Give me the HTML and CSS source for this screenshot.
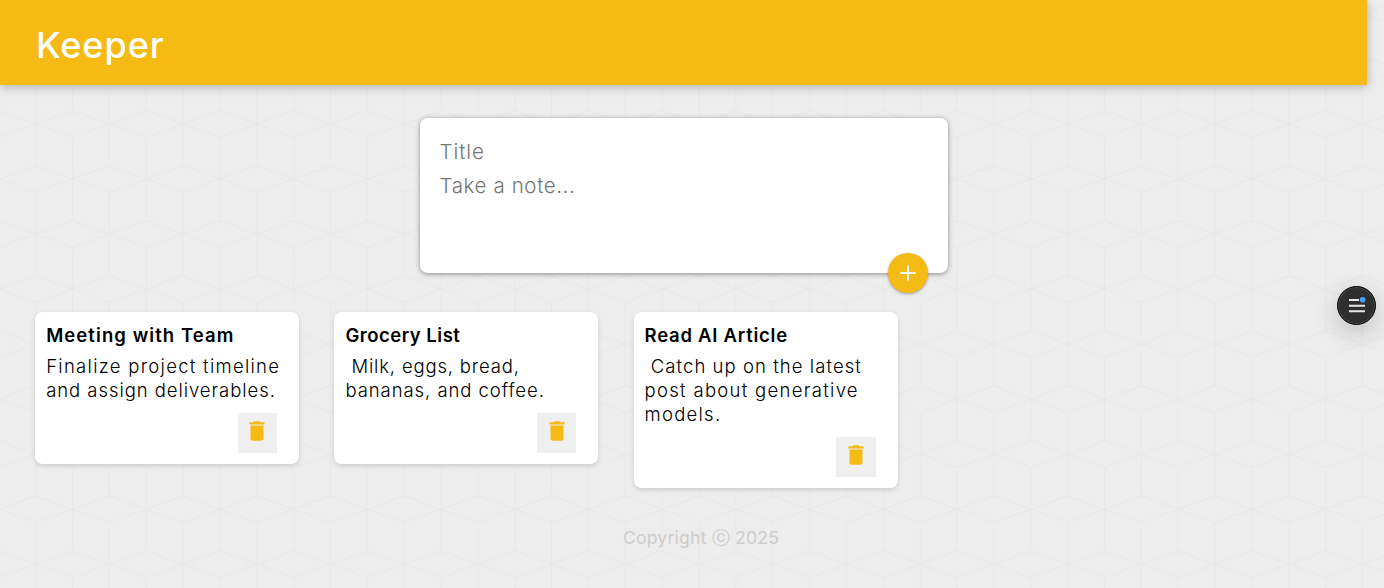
FILE: index.html
```html
<!DOCTYPE html>
<html lang="en">
<head>
<meta charset="utf-8">
<title>Keeper</title>
<link rel="stylesheet" href="styles.css">
</head>
<body>
<svg class="backdrop" aria-hidden="true">
  <defs>
    <pattern id="cubes" x="17.2" y="-13.6" width="73.71" height="110.07" patternUnits="userSpaceOnUse">
      <path class="cube-lines" d="M-18.43 14.2L18.43 27.5L-18.43 40.8M18.43 27.5L55.28 14.2L92.14 27.5M18.43 27.5L55.28 40.8L92.14 27.5M-18.43 82.5L18.43 69.2L55.28 82.5L18.43 95.8L-18.43 82.5M92.14 69.2L55.28 82.5L92.14 95.8M18.43 95.8V110.07M18.43 0V69.2M55.28 40.8V110.07M55.28 0V14.2"/>
    </pattern>
  </defs>
  <rect width="100%" height="100%" fill="url(#cubes)"/>
</svg>
<div class="page">
  <header class="header"><h1 class="logo">Keeper</h1></header>
  <form class="create-note">
    <input class="field field-title" placeholder="Title">
    <textarea class="field field-body" placeholder="Take a note..." rows="3"></textarea>
    <button class="add" type="button" aria-label="Add"><svg viewBox="0 0 24 24"><path d="M19 12.9h-6.1V19h-1.8v-6.1H5v-1.8h6.1V5h1.8v6.1H19z"/></svg></button>
  </form>
  <main class="notes">
    <article class="note">
      <h2 class="note-title t1">Meeting with Team</h2>
      <p class="note-text"><span class="a1">Finalize project timeline</span><br><span class="a2">and assign deliverables.</span></p>
      <button class="delete" type="button" aria-label="Delete"><svg viewBox="0 0 24 24"><path d="M6 19c0 1.1.9 2 2 2h8c1.1 0 2-.9 2-2V7H6v12zM19 4h-3.500l-1-1h-5l-1 1H5v2h14V4z"/></svg></button>
    </article>
    <article class="note">
      <h2 class="note-title t2">Grocery List</h2>
      <p class="note-text"><span class="b1">&nbsp;Milk, eggs, bread,</span><br><span class="b2">bananas, and coffee.</span></p>
      <button class="delete" type="button" aria-label="Delete"><svg viewBox="0 0 24 24"><path d="M6 19c0 1.1.9 2 2 2h8c1.1 0 2-.9 2-2V7H6v12zM19 4h-3.500l-1-1h-5l-1 1H5v2h14V4z"/></svg></button>
    </article>
    <article class="note">
      <h2 class="note-title t3">Read AI Article</h2>
      <p class="note-text"><span class="c1">&nbsp;Catch up on the latest</span><br><span class="c2">post about generative</span><br><span class="c3">models.</span></p>
      <button class="delete" type="button" aria-label="Delete"><svg viewBox="0 0 24 24"><path d="M6 19c0 1.1.9 2 2 2h8c1.1 0 2-.9 2-2V7H6v12zM19 4h-3.500l-1-1h-5l-1 1H5v2h14V4z"/></svg></button>
    </article>
  </main>
  <footer class="footer">Copyright ⓒ 2025</footer>
</div>
<button class="assistant" type="button" aria-label="Menu">
  <svg viewBox="0 0 39 39"><path d="M12 14h10M12 19.700h16M12 25.300h16" stroke="#e6e6e6" stroke-width="1.900"/><circle cx="25.600" cy="13.800" r="2.800" fill="#4a9ffb"/></svg>
</button>
</body>
</html>
```

FILE: styles.css
```css
* { box-sizing: border-box; }
html { height: 100%; }
body {
  margin: 0;
  height: 588px;
  overflow: hidden;
  background: #ededed;
  font-family: Inter, "Noto Sans", sans-serif;
}
button { border: 0; padding: 0; cursor: pointer; }
.backdrop { position: absolute; inset: 0; width: 100%; height: 100%; z-index: -1; }
.cube-lines { fill: none; stroke: #e8e8e8; stroke-width: 1.3; }
.page { width: 1367px; }
.header {
  height: 85px;
  padding: 0 36px;
  display: flex;
  align-items: center;
  background: #f5ba13;
  box-shadow: 0 2px 10px rgba(0, 0, 0, .26);
}
.logo { margin: 4px 0 0; color: #fff; font-size: 36px; font-weight: 500; line-height: 44px; letter-spacing: .95px; }
.create-note {
  position: relative;
  width: 528px;
  height: 155px;
  margin: 33px auto 0;
  padding: 17px 20px;
  display: flex;
  flex-direction: column;
  background: #fff;
  border-radius: 7.7px;
  box-shadow: 0 1px 5.5px rgb(138, 137, 137);
}
.field {
  display: block;
  width: 100%;
  border: 0;
  padding: 0;
  outline: 0;
  resize: none;
  background: none;
  font: 300 20.500px/34px Inter, sans-serif;
}
.field::placeholder { color: #757575; opacity: 1; }
.field-title { height: 34px; letter-spacing: .95px; }
.field-body { letter-spacing: .62px; }
.add {
  position: absolute;
  right: 20px;
  bottom: -20px;
  width: 40px;
  height: 40px;
  border-radius: 50%;
  background: #f5ba13;
  box-shadow: 0 1px 3px rgba(0, 0, 0, .35);
}
.add svg { display: block; width: 26px; height: 26px; margin: auto; fill: #fff; }
.notes { display: flex; align-items: flex-start; gap: 35.2px; margin-top: 39px; padding-left: 35.2px; }
.note {
  width: 264px;
  padding: 11px;
  display: flex;
  flex-direction: column;
  background: #fff;
  border-radius: 7.7px;
  box-shadow: 0 2px 5px #ccc;
}
.note-title { margin: 0 0 6px; font-size: 18.500px; font-weight: 600; line-height: 25px; white-space: nowrap; }
.note-text { margin: 0 0 11px; font-size: 18.500px; font-weight: 300; line-height: 24px; white-space: nowrap; }
.t1 { letter-spacing: 1.08px; }
.t2 { letter-spacing: .5px; }
.t3 { letter-spacing: .75px; }
.a1 { letter-spacing: 1.28px; }
.a2 { letter-spacing: .94px; }
.b1 { letter-spacing: .83px; }
.b2 { letter-spacing: .94px; }
.c1 { letter-spacing: 1.06px; }
.c2 { letter-spacing: 1.3px; }
.c3 { letter-spacing: 1.25px; }
.delete { align-self: flex-end; width: 39.600px; height: 40px; margin-right: 11px; background: #efefef; }
.delete svg { display: block; width: 26px; height: 26px; margin: -4px auto 0; fill: #f5ba13; }
.footer { margin-top: 38px; padding-left: 35px; text-align: center; color: #ccc; font-size: 17.600px; line-height: 24px; letter-spacing: .2px; }
.assistant {
  position: fixed;
  right: 8px;
  top: 286px;
  width: 39px;
  height: 39px;
  border: 1px solid #000;
  border-radius: 50%;
  background: #2e2e2e;
  box-shadow: inset 0 0 0 1px #4b4b4b, 0 8px 26px rgba(0, 0, 0, .2);
}
.assistant svg { display: block; width: 39px; height: 39px; margin: -1px; fill: none; }
```
